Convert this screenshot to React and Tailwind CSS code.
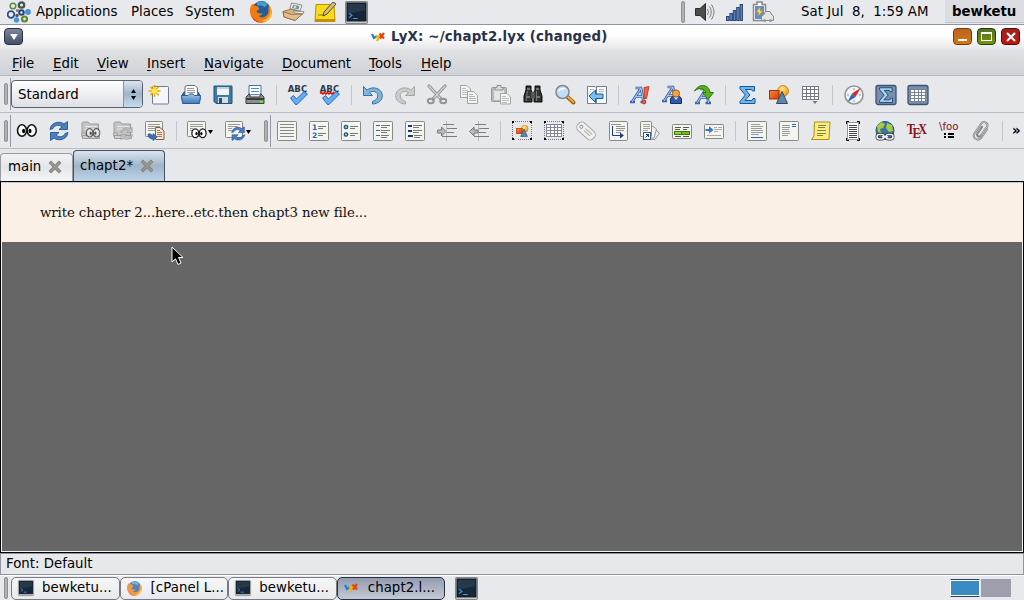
import React from 'react';

/* ---------- icon helpers ---------- */
const Svg = ({ size = 20, children, className = '' }) => (
  <svg width={size} height={size} viewBox="0 0 20 20" className={`block shrink-0 overflow-visible ${className}`}>
    <defs>
      <linearGradient id="orange" x1="0" y1="0" x2="1" y2="1"><stop offset="0" stopColor="#ff8a3c" /><stop offset="1" stopColor="#d03c00" /></linearGradient>
      <linearGradient id="blueFill" x1="0" y1="0" x2="0" y2="1"><stop offset="0" stopColor="#9fc6e8" /><stop offset="1" stopColor="#3f78b4" /></linearGradient>
      <radialGradient id="gold" cx=".4" cy=".3" r=".8"><stop offset="0" stopColor="#ffe08a" /><stop offset="1" stopColor="#e8940c" /></radialGradient>
    </defs>
    {children}
  </svg>
);
const R = (p) => <rect shapeRendering="crispEdges" {...p} />;
const Lines = ({ rows, color = '#9a9a9a' }) =>
  rows.map(([x, y, w], i) => <R key={i} x={x} y={y} width={w} height="1" fill={color} />);
const Page = ({ x = 0.5, y = 0.5, w = 19, h = 19, fill = '#f4f4f1', stroke = '#868a80' }) => (
  <rect x={x} y={y} width={w} height={h} rx=".8" fill={fill} stroke={stroke} />
);

const Eyes = ({ x = 0, y = 0, s = 1 }) => (
  <g transform={`translate(${x} ${y}) scale(${s})`}>
    <ellipse cx="5" cy="9.5" rx="4.5" ry="5.8" fill="#fff" stroke="#151515" strokeWidth="1.6" />
    <ellipse cx="14.7" cy="9.5" rx="4.5" ry="5.8" fill="#fff" stroke="#151515" strokeWidth="1.6" />
    <ellipse cx="6.6" cy="10" rx="1.500" ry="2.200" fill="#000" /><ellipse cx="13" cy="10" rx="1.500" ry="2.200" fill="#000" />
  </g>
);
const Refresh = ({ x = 0, y = 0, s = 1, c = '#4a80c0', d = '#204a87' }) => (
  <g transform={`translate(${x} ${y}) scale(${s})`} fill={c} stroke={d} strokeWidth=".8" strokeLinejoin="round">
    <path d="M1 8.500C2 1 11 -.5 15 3L18.500 .500V8.500H10L13 5.800C9 3 5.500 4.500 4 7.500Z" />
    <path d="M19 11.500C18 19 9 20.500 5 17L1.500 19.500V11.500H10L7 14.200C11 17 14.500 15.500 16 12.500Z" />
  </g>
);
const Folder = () => (
  <g fill="#c4c4c4" stroke="#9b9b9b">
    <path d="M1 16V2.500Q1 1 2.500 1H7L9 3H17.500V16Z" /><path d="M4 5.500H16M4 8H13" stroke="#e8e8e8" />
    <path d="M.5 12H4L5 16.500H1.500Z" fill="#d8d8d8" /><path d="M1.500 14.500H18L18.500 17.500H1.500Z" fill="#d0d0d0" />
  </g>
);
const Grid = ({ x, y, w, h, cols, rows, stroke = '#747883', fill = '#fff' }) => (
  <g shapeRendering="crispEdges" stroke={stroke} fill="none">
    <rect x={x} y={y} width={w} height={h} fill={fill} />
    {Array.from({ length: cols - 1 }, (_, i) => <path key={'c' + i} d={`M${x + Math.round((w / cols) * (i + 1))} ${y}v${h}`} />)}
    {Array.from({ length: rows - 1 }, (_, i) => <path key={'r' + i} d={`M${x} ${y + Math.round((h / rows) * (i + 1))}h${w}`} />)}
  </g>
);
const Corners = () => (
  <g shapeRendering="crispEdges">
    <rect x=".5" y=".5" width="19" height="18" fill="none" stroke="#777" strokeDasharray="1 1" />
    <path d="M0 0h2v2h-2zM18 0h2v2h-2zM0 17h2v2h-2zM18 17h2v2h-2z" fill="#000" />
  </g>
);
const Shapes = ({ x = 0, y = 0, s = 1 }) => (
  <g transform={`translate(${x} ${y}) scale(${s})`}>
    <circle cx="14" cy="6" r="5.500" fill="url(#gold)" stroke="#c77708" strokeWidth=".8" />
    <rect x=".5" y="5.500" width="9.500" height="8.500" fill="url(#orange)" stroke="#a83200" />
    <path d="M13 6.500L18.500 18.500H7.500Z" fill="#5e86a6" stroke="#2c4a63" strokeLinejoin="round" />
  </g>
);
const Sigma = ({ light }) => (
  <path d="M3 1.500H17.500V6H15.500L14.500 4.500H8.500L13 10L8 15.500H15L16 13.500H18V18.500H3V16.500L8.300 10L3 3.700Z"
    fill={light ? '#a9d4f5' : '#72b4ea'} stroke={light ? '#123c66' : '#0d5a9c'} strokeLinejoin="round" />
);
const BlueA = ({ x = 0, y = 0 }) => (
  <g transform={`translate(${x} ${y})`} fill="none" strokeLinejoin="round">
    <path d="M2 17L11 3L13.500 17M5.500 11.500H12.500M0 17H5M10.500 17H16M5.500 3H12" stroke="#3a62a4" strokeWidth="2.700" />
    <path d="M2 17L11 3L13.500 17M5.500 11.500H12.500M6 3H11" stroke="#a9c4ea" strokeWidth="1.100" />
  </g>
);
const Check = () => <path d="M2.500 13L5.500 10.500L8.500 14L16 6.500L19.500 9L9 19.500H7.500Z" fill="#64aef2" stroke="#1e60ac" strokeWidth=".9" strokeLinejoin="round" />;
const Abc = () => <text x="-.3" y="6.600" fontFamily="DejaVu Sans" fontWeight="bold" fontSize="8.800" textLength="19.500" lengthAdjust="spacingAndGlyphs" fill="#2e3b48">ABC</text>;
const UndoPath = ({ c, d }) => (
  <path d="M.5 1.500V10.500H9.500L6.500 7.500C10.500 5 15 7 14.800 11C14.600 14 12.500 15.500 9.500 16.500V19C15.500 18.700 19.300 15.500 19.300 10.500C19 3.500 10 .5 4 5Z" fill={c} stroke={d} strokeLinejoin="round" />
);

const I = {
  newDoc: <><Page x={3.5} y={1.5} w={16} h={17.5} fill="#f3f7fb" stroke="#6f7a86" /><path d="M5.500 0V12M-.5 6H11.500M1.300 1.800L9.700 10.200M9.700 1.800L1.300 10.200" stroke="#f0a800" strokeWidth="1.500" /><circle cx="5.500" cy="6" r="2.600" fill="#ffe94a" /></>,
  open: <><path d="M1 10.500L3 7H17L19 10.500V15H1Z" fill="#3465a4" stroke="#204a87" /><path d="M4 11.500V1.500L6 .5H14L16.500 3V11.500Z" fill="#fafafa" stroke="#6e6e6e" /><Lines rows={[[6, 3, 7], [6, 5, 8], [6, 7, 8]]} /><path d="M.5 10.500H7L8.500 9H12L13.500 10.500H19.500L18.500 18.500H1.500Z" fill="url(#blueFill)" stroke="#2b5b98" /></>,
  save: <><path d="M1 1H19V18.500H3L1 16.500Z" fill="#3b7da8" stroke="#24516f" /><R x="4" y="2" width="12" height="8" fill="#f5f5f5" /><R x="4" y="2" width="12" height="2" fill="#b9cfdf" /><R x="5" y="12" width="10" height="6" fill="#d6dce0" /><R x="6" y="13" width="3" height="5" fill="#24516f" /></>,
  print: <><path d="M4 10V.5H16V10" fill="#fff" stroke="#3b76ae" /><Lines color="#4a90c8" rows={[[6, 3, 8], [6, 6, 8], [6, 9, 8]]} /><path d="M1 12L4 9H5V12H15V9H16L19 12V18.500H1Z" fill="#8d8f8f" stroke="#3c3f3f" /><R x="1" y="13" width="18" height="2" fill="#3a3c3c" /><R x="15" y="16" width="3" height="2" fill="#67e62a" /></>,
  spell: <><Abc /><Check /></>,
  spell2: <><Abc /><path d="M0 8.500L1.500 7.500L3 9L4.500 7.500L6 9L7.500 7.500L9 9L10.500 7.500L12 9L13.500 7.500L15 9" fill="none" stroke="#e00000" strokeWidth="1.400" /><Check /></>,
  undo: <UndoPath c="#82b5da" d="#39709f" />,
  redo: <g transform="translate(20 0) scale(-1 1)"><UndoPath c="#ccc" d="#a5a5a5" /></g>,
  cut: <g fill="none" strokeLinecap="round"><path d="M2 1L14 14M18 1L6 14" stroke="#8c8c8c" strokeWidth="3.200" /><path d="M2 1L13 13M18 1L7 13" stroke="#d2d2d2" strokeWidth="1.400" /><ellipse cx="3.800" cy="16" rx="3" ry="2.300" stroke="#929292" strokeWidth="1.900" /><ellipse cx="16.200" cy="16" rx="3" ry="2.300" stroke="#929292" strokeWidth="1.900" /></g>,
  copy: <g><path d="M1.500 .5H8L11.500 4V12.500H1.500Z" fill="#f3f3f3" stroke="#a2a2a2" /><Lines color="#bdbdbd" rows={[[3, 3, 4], [3, 5, 6], [3, 7, 6], [3, 9, 6]]} /><path d="M8.500 6.500H14.500L18.500 10.500V18.500H8.500Z" fill="#f3f3f3" stroke="#a2a2a2" /><Lines color="#b5b5b5" rows={[[10, 9, 4], [10, 11, 6], [10, 13, 7], [10, 15, 7]]} /></g>,
  paste: <g><rect x=".5" y="2.500" width="15" height="14" rx="1" fill="#b9b9b9" stroke="#999" /><rect x="3" y="5" width="10" height="10" fill="#e4e4e4" /><path d="M4 5V2.500H6V.5H10V2.500H12V5Z" fill="#ddd" stroke="#8e8e8e" /><path d="M9.500 8.500H16L19.500 12V19H9.500Z" fill="#f5f5f5" stroke="#a3a3a3" /><Lines color="#bbb" rows={[[11, 11, 4], [11, 13, 7], [11, 15, 7], [11, 17, 5]]} /></g>,
  find: <g><path d="M3 1H8V5L9 7V17H1V11L3 5ZM12 1H17V5L19 11V17H11V7L12 5Z" fill="#333" stroke="#0c0c0c" /><path d="M8 7h4v6H8z" fill="#555" /><path d="M3 12H7M13 12H17M4 4H7M13 4H16" stroke="#898989" strokeWidth="1.500" /><path d="M4.500 6L3 16M13.500 6V16" stroke="#777" /></g>,
  zoom: <g><path d="M12.500 12L18.500 17.500" stroke="#99580b" strokeWidth="4" strokeLinecap="round" /><path d="M13 12L18.300 17" stroke="#f3aa32" strokeWidth="2" strokeLinecap="round" /><circle cx="7.500" cy="7" r="6.500" fill="#c3ddf4" stroke="#7b8992" strokeWidth="1.500" /><path d="M3 7C4 2 9 2 11 4C8 4 5 5 3 7Z" fill="#fff" /></g>,
  goBack: <g><path d="M.5 1.500H8L9.500 3V18.500H.5Z" fill="#fafafa" stroke="#727f8d" /><path d="M9.500 1.500H19.500V18.500H9.500Z" fill="#fafafa" stroke="#727f8d" /><Lines color="#bbb" rows={[[3, 4, 4], [12, 4, 5], [12, 6, 5]]} /><path d="M2 11L8.500 5V9H16V13.500H8.500V17.500Z" fill="#7cbdf0" stroke="#14629f" strokeLinejoin="round" /></g>,
  emph: <g><BlueA /><path d="M14 2.500L19 1.500L16.500 13.500H14Z" fill="#ef6345" stroke="#ae2d13" strokeWidth=".8" /><circle cx="14" cy="17" r="1.900" fill="#ef6345" stroke="#ae2d13" strokeWidth=".8" /></g>,
  noun: <g><BlueA x={0} y={-1} /><path d="M8.500 18.500V14Q9 11 14 11Q19 11 19.500 14V18.500Z" fill="#2d5da6" stroke="#152f66" /><path d="M12 12L14 15L16 12Z" fill="#eee" /><circle cx="14" cy="8.500" r="3.600" fill="#f2a345" stroke="#ad5d0b" /></g>,
  apply: <g><BlueA x={1} y={1} /><path d="M.5 6C5-2 15-1 16 7.500H19.500L14 14.500L8.500 7.500H12C11 3.500 5 2 .5 6Z" fill="#55b31c" stroke="#2d7608" strokeLinejoin="round" /></g>,
  sigma: <Sigma />,
  shapes: <Shapes />,
  table: <g><Grid x={1.5} y={1.5} w={16} h={13} cols={4} rows={4} /><path d="M11.500 16H16.500L14 19Z" fill="#777" /></g>,
  compass: <g><circle cx="10" cy="10" r="9" fill="#f3f5f8" stroke="#969696" strokeWidth="1.600" /><path d="M10 3v2M10 15v2M3 10h2M15 10h2" stroke="#8295aa" /><path d="M16.500 3L11.500 12L8 8.500Z" fill="#e3261c" /><path d="M3.500 17L8 8.500L11.500 12Z" fill="#2f63bd" /></g>,
  sigmaOn: <g><rect x="0" y=".5" width="20" height="19" rx="2" fill="#7890ae" stroke="#3e536f" strokeWidth="1.300" /><g transform="translate(1 1.500) scale(.86)"><Sigma light /></g></g>,
  tableOn: <g><rect x="0" y=".5" width="20" height="19" rx="2" fill="#7990ad" stroke="#3e536f" strokeWidth="1.300" /><Grid x={2.5} y={4.5} w={15} h={12} cols={4} rows={4} stroke="#75829a" /></g>,

  eyes: <Eyes />,
  refresh: <Refresh />,
  folderEyes: <><Folder /><g opacity=".6"><Eyes x={5} y={5} s={0.72} /></g></>,
  folderRefresh: <><Folder /><Refresh x={7} y={6} s={0.66} c="#c3c3c3" d="#8e8e8e" /></>,
  docUpdate: <><Page w={17} h={15} /><Lines rows={[[3, 3, 12], [3, 5, 12], [3, 7, 7], [3, 9, 7]]} /><path d="M10.500 6.500H15L19 10V18.500H10.500Z" fill="#f4e6d3" stroke="#806040" /><Lines color="#9a7a60" rows={[[12, 9, 3], [12, 11, 5], [12, 13, 5], [12, 15, 5]]} /><path d="M3 13H6Q6 15 8 15V12.500L12 16L8 19.500V18Q3 18 3 13Z" fill="#3b70b0" stroke="#204a87" strokeWidth=".7" /></>,
  docEyes: <><Page w={18} h={15} /><Lines rows={[[3, 3, 13], [3, 5, 13], [3, 7, 3], [3, 9, 2]]} /><Eyes x={4.5} y={5} s={0.76} /></>,
  docRefresh: <><Page w={17} h={16} /><Lines rows={[[3, 3, 12], [3, 5, 10], [3, 7, 4], [3, 9, 4]]} /><Refresh x={6} y={5.5} s={0.72} /></>,
  plain: <><Page /><Lines rows={[[3, 3, 14], [3, 6, 14], [3, 9, 14], [3, 12, 14], [3, 15, 14]]} color="#888" /></>,
  numbered: <><Page /><g fontFamily="DejaVu Sans" fontWeight="bold" fontSize="7.500" fill="#3465a4"><text x="3" y="9">1</text><text x="3" y="16.500">2</text></g><Lines rows={[[9, 5, 8], [9, 7, 5], [9, 12, 8], [9, 14, 5]]} color="#777" /></>,
  bullets: <><Page /><circle cx="5" cy="6" r="1.700" fill="#9fd4e0" stroke="#1b5874" strokeWidth="1.300" /><circle cx="5" cy="13.500" r="1.700" fill="#9fd4e0" stroke="#1b5874" strokeWidth="1.300" /><Lines rows={[[9, 5, 8], [9, 7, 5], [9, 12, 8], [9, 14, 5]]} color="#777" /></>,
  list: <><Page /><Lines rows={[[3, 4, 4], [3, 9, 4], [3, 14, 4]]} color="#3465a4" /><Lines rows={[[8, 4, 9], [8, 6, 6], [8, 9, 9], [8, 11, 6], [8, 14, 8], [8, 16, 6]]} color="#777" /></>,
  descr: <><Page /><g fill="#163c69"><R x="3" y="4" width="4" height="2" /><R x="3" y="9" width="4" height="2" /><R x="3" y="14" width="5" height="2" /></g><Lines rows={[[8, 4, 9], [8, 6, 6], [8, 9, 9], [8, 11, 6], [9, 14, 8], [9, 16, 6]]} color="#777" /></>,
  indent: <><R x="9" y="0" width="1" height="20" fill="#bbb" /><Lines rows={[[6, 3, 11], [10, 7, 10], [10, 11, 7], [5, 15, 15]]} color="#7d7d7d" /><path d="M.5 9H4.500V6L9 10.500L4.500 15V12H.5Z" fill="#bbb" stroke="#777" /></>,
  outdent: <><R x="9" y="0" width="1" height="20" fill="#bbb" /><Lines rows={[[6, 3, 11], [10, 7, 10], [10, 11, 7], [5, 15, 15]]} color="#7d7d7d" /><path d="M9 9H5V6L.5 10.500L5 15V12H9Z" fill="#bbb" stroke="#777" /></>,
  figFloat: <><Corners /><Shapes x={4} y={4} s={0.62} /></>,
  tabFloat: <><Corners /><Grid x={2.5} y={3.5} w={15} h={12} cols={4} rows={4} stroke="#85859a" /></>,
  tag: <g transform="rotate(42 10 10)"><rect x="-.5" y="5" width="21" height="10" rx="4.500" fill="#f0f0ee" stroke="#a4a4a4" /><circle cx="3.700" cy="10" r="1.500" fill="#fff" stroke="#999" /><path d="M8 8.500h9M8 11h8" stroke="#aaa" /></g>,
  cross: <><Page x={1.5} w={18} /><Lines rows={[[3, 3, 10], [8, 5, 9], [8, 7, 9], [8, 9, 8], [8, 11, 5]]} color="#929292" /><path d="M4.500 5V14.500H13" fill="none" stroke="#203f75" /><path d="M12 11.500L16 14.500L12 17.500Z" fill="#203f75" /></>,
  cite: <><path d="M10 4.500L19.500 12L15 18.500H7Z" fill="#eeeeec" stroke="#999" /><path d="M8 2L16.500 8L14 17H6Z" fill="#f1f1ef" stroke="#999" /><Page x={0.5} w={11} h={15} /><Lines rows={[[3, 3, 7], [3, 5, 7], [3, 7, 7], [3, 9, 5]]} color="#a4a4a4" /><rect x="3.500" y="11.500" width="7" height="7" fill="#fff" stroke="#355783" /><path d="M5.500 16.500L8.500 13.500M6 13.500H8.500V16" fill="none" stroke="#16376a" /></>,
  index: <><Page y={3.5} h={14} /><Lines rows={[[3, 6, 6], [11, 6, 6], [3, 8, 5], [11, 8, 4], [3, 15, 6], [11, 15, 6]]} color="#555" /><R x="2" y="10" width="16" height="4" fill="#3f7a08" /><R x="3" y="11" width="6" height="2" fill="#8ed63c" /><R x="10" y="11" width="7" height="2" fill="#73b51c" /></>,
  nomencl: <><Page y={3.5} h={14} /><path d="M1.500 8H5V5L9.500 9L5 12.500V10H1.500Z" fill="#3279d0" /><Lines rows={[[10, 6, 3], [14, 6, 4], [10, 8, 8], [10, 10, 4], [3, 14, 14]]} color="#aaa" /></>,
  foot: <><Page /><Lines rows={[[4, 3, 9], [4, 5, 12], [4, 7, 11], [4, 9, 12], [4, 11, 12], [4, 13, 8]]} /><R x="4" y="16" width="12" height="1" fill="#3465a4" /></>,
  margin: <><Page /><Lines rows={[[3, 4, 8], [3, 6, 8], [3, 8, 7], [3, 10, 8], [3, 12, 8], [3, 14, 6]]} /><Lines rows={[[13, 3, 4], [13, 5, 4]]} color="#3465a4" /></>,
  note: <><path d="M3.500 1H19L18 18.500H.5L3 15Z" fill="#f9ee86" stroke="#ae8f0c" /><Lines rows={[[7, 4, 8], [7, 6, 7], [6, 9, 9], [6, 12, 9], [6, 14, 6]]} color="#8b8038" /></>,
  box: <><rect x="4.500" y="1.500" width="11" height="17" fill="#fff" stroke="#999" /><Lines rows={[[6, 4, 8], [6, 6, 8], [6, 8, 8], [6, 10, 8], [6, 12, 8], [6, 14, 8], [6, 16, 8]]} color="#444" /><path d="M6 .5H3.500V3M14 .5H16.500V3M6 19.500H3.500V17M14 19.500H16.500V17" fill="none" stroke="#000" /></>,
  link: <><circle cx="10" cy="9.500" r="9" fill="#3773ad" stroke="#24527d" /><path d="M2 5L6 1L10 3L8 7L5 8L6 12L3 11ZM12 2L17 4L18 10L14 11L11 7Z" fill="#a9cb3c" /><g fill="none" stroke="#333" strokeWidth="3"><rect x="2" y="13.500" width="7" height="4.500" rx="2.200" /><rect x="11" y="13.500" width="7" height="4.500" rx="2.200" /><path d="M7 15.800H13" /></g><g fill="none" stroke="#f0f0f0" strokeWidth="1.600"><rect x="2" y="13.500" width="7" height="4.500" rx="2.200" /><rect x="11" y="13.500" width="7" height="4.500" rx="2.200" /><path d="M7 15.800H13" /></g></>,
  tex: <text transform="translate(-.3 0) scale(.86 1)" x="0" y="13.500" fontFamily="Liberation Serif" fontWeight="bold" fontSize="14" fill="#8d1015">T<tspan dx="-2.600" dy="3.500">E</tspan><tspan dx="-2.600" dy="-3.500">X</tspan></text>,
  foo: <g><text x="0" y="9" fontFamily="DejaVu Sans" fontSize="10" textLength="19.500" lengthAdjust="spacingAndGlyphs" fill="#7e1519">\foo</text><g fill="#000"><R x="5" y="12" width="2" height="2" /><R x="5" y="15" width="2" height="2" /><R x="9" y="12" width="6" height="2" /><R x="9" y="15" width="6" height="2" /></g></g>,
  clip: <g fill="none" transform="rotate(35 10 10)" strokeLinecap="round"><path d="M14 5V15Q14 19.500 10 19.500Q6 19.500 6 15V3.500Q6 .5 9.500 .5Q12.500 .5 12.500 3.500V13.500Q12.500 16 10.300 16Q8.500 16 8.500 13.500V6" stroke="#848484" strokeWidth="2" /><path d="M14 5V15Q14 19.500 10 19.500Q6 19.500 6 15V3.500Q6 .5 9.500 .5Q12.500 .5 12.500 3.500V13.500" stroke="#c9c9c9" strokeWidth=".8" /></g>,
};

const Firefox = ({ size, className }) => (
  <Svg size={size} className={className}>
    <circle cx="10" cy="10" r="9.500" fill="#e0560f" />
    <circle cx="10.500" cy="7.500" r="7.500" fill="#1f5f9e" />
    <path d="M6 1.500Q11-1 15.500 2.500Q16 5 13 5.500Q10 3 7 4.500Z" fill="#4b9ad0" />
    <path d="M0 10Q-.5 5 2.500 2.500L3.500 4.500Q6 4 7.500 5.500L8.500 7.500Q6 8 6 10Q8 12 11.500 11Q10.500 14 7.500 13.500Q11.500 17 15.500 13Q17.500 10 16.500 6L18.500 5Q22 13 16 18Q10 21.500 4.500 18Q.5 15 0 10Z" fill="#ef7c16" />
    <path d="M17 3Q20 8 17.500 13.500Q15 17.500 10 18Q17.500 20.500 19.500 12Q20 6 17 3Z" fill="#fdc436" />
    <path d="M.8 12Q3 17.500 9 19.500Q4 20 .8 12Z" fill="#b9300f" />
  </Svg>
);
const Terminal = ({ size, className }) => (
  <Svg size={size} className={className}>
    <rect x=".5" y=".5" width="19" height="19" rx="1" fill="#dededa" stroke="#878783" />
    <rect x="1.800" y="1.800" width="16.400" height="15.500" fill="#152739" stroke="#0a1520" />
    <path d="M2.500 2.500H17.500V8L2.500 11Z" fill="#26394b" />
    <path d="M3.500 10.500L6 12.500L3.500 14.500M7 15.200H11" fill="none" stroke="#4a9ae8" />
  </Svg>
);
const LyxLogo = () => (
  <svg width="14" height="10" viewBox="0 0 14 10" className="block shrink-0">
    <path d="M1 2L3 6L6 4" fill="none" stroke="#1f7de0" strokeWidth="2.200" />
    <path d="M5 4L8 5L10 3M8 5L6 9" fill="none" stroke="#f5b400" strokeWidth="2.400" />
    <path d="M8.500 1.500L13 6.500M13 1L9 6.500" fill="none" stroke="#e04412" strokeWidth="2.200" />
  </svg>
);

/* ---------- building blocks ---------- */
const Slot = ({ name }) => <div className="flex h-8 w-8 shrink-0 items-center justify-center"><Svg>{I[name]}</Svg></div>;
const Sep = () => <div className="flex h-8 w-[11px] shrink-0 items-center justify-center"><div className="h-5 w-px bg-[#c6c7cc]" /></div>;
const Slots = ({ names }) => names.map((n, i) => (n === '|' ? <Sep key={i} /> : <Slot key={i} name={n} />));
const DropSlot = ({ name }) => (
  <div className="flex h-8 w-[38px] shrink-0 items-center pl-[5px]">
    <Svg>{I[name]}</Svg>
    <svg width="5" height="4" viewBox="0 0 5 4" className="mt-[3px] ml-px"><path d="M0 0H5L2.500 4Z" fill="#000" /></svg>
  </div>
);
const Handle = () => <div className="h-[22px] w-1 shrink-0 rounded-sm border border-[#8f9195] bg-[#b0b1b5]" />;
const Close = () => (
  <svg width="14" height="14" viewBox="0 0 14 14" className="block shrink-0">
    <path d="M3 3L11 11M11 3L3 11" stroke="#80817a" strokeWidth="3.400" strokeLinecap="square" />
    <path d="M3 3L11 11M11 3L3 11" stroke="#96978f" strokeWidth="1.800" strokeLinecap="square" />
  </svg>
);

const MENU = [['File', 'w-[41px]'], ['Edit', 'w-[44px]'], ['View', 'w-[50px]'], ['Insert', 'w-[57px]'], ['Navigate', 'w-[78px]'], ['Document', 'w-[87px]'], ['Tools', 'w-[52px]'], ['Help', 'w-[40px]']];
const STANDARD = ['newDoc', 'open', 'save', 'print', '|', 'spell', 'spell2', '|', 'undo', 'redo', 'cut', 'copy', 'paste', 'find', 'zoom', 'goBack', '|', 'emph', 'noun', 'apply', '|', 'sigma', 'shapes', 'table', '|', 'compass', 'sigmaOn', 'tableOn'];
const VIEW = ['eyes', 'refresh', 'folderEyes', 'folderRefresh', 'docUpdate', '|'];
const EXTRA = ['plain', 'numbered', 'bullets', 'list', 'descr', 'indent', 'outdent', '|', 'figFloat', 'tabFloat', 'tag', 'cross', 'cite', 'index', 'nomencl', '|', 'foot', 'margin', 'note', 'box', 'link', 'tex', 'foo', 'clip', '|'];

function Panel() {
  return (
    <div className="flex h-[25px] shrink-0 items-center border-b border-[#9293a3] bg-[#e8e9ec]">
      <svg width="24" height="22" viewBox="0 0 24 22" className="ml-[7px] block shrink-0" fill="none">
        <circle cx="6" cy="5" r="2.800" stroke="#5d8b40" strokeWidth="1.500" />
        <circle cx="14.500" cy="4" r="2.700" stroke="#4b554f" strokeWidth="2.300" />
        <circle cx="4" cy="13.500" r="3.300" stroke="#264e83" strokeWidth="1.700" />
        <circle cx="14.500" cy="11.500" r="2.300" stroke="#1f467d" strokeWidth="2" />
        <circle cx="21" cy="11" r="2.900" fill="#4d92d4" /><circle cx="9.500" cy="19" r="2.700" fill="#4d92d4" />
        <circle cx="17.500" cy="18" r="2.500" stroke="#5d8b29" strokeWidth="2.200" />
        <circle cx="10.500" cy="9.500" r="1.600" fill="#777" /><circle cx="10" cy="14.500" r="1.700" fill="#555" />
      </svg>
      <span className="ml-[5px] w-[95px]">Applications</span>
      <span className="w-[54px]">Places</span>
      <span className="w-[65px]">System</span>
      <Firefox size={22} />
      <svg width="23" height="20" viewBox="0 0 23 20" className="ml-[10px] block shrink-0">
        <path d="M1 9.500L9 7L21 10.500L13 18.500L2 15Z" fill="#d8b27b" stroke="#866438" strokeWidth=".8" />
        <path d="M9.500 1L20 3L18 9L8 6.500Z" fill="#f4f4ef" stroke="#777" strokeWidth=".8" />
        <path d="M11 2.800L17.500 4L16.500 7.500L10 6Z" fill="#6f98a2" /><circle cx="13" cy="5" r="1.300" fill="#cfe0c0" />
        <path d="M11 9L22 9.500L21 12L13 11Z" fill="#eeeeea" stroke="#777" strokeWidth=".7" />
        <path d="M1 9.500L9.500 12.500L20.500 12L13 18.500L2 15Z" fill="#e1bf8d" stroke="#866438" strokeWidth=".8" />
      </svg>
      <svg width="22" height="21" viewBox="0 0 22 21" className="ml-[9px] block shrink-0">
        <path d="M2 2.500H20L21 19.500H1Z" fill="#f7dc1c" stroke="#b88d08" /><path d="M1 17H21V20H1Z" fill="#c58e0a" />
        <path d="M4 13H11" stroke="#8f7a18" /><path d="M9 14L10 10L19 0L22 2L13 12Z" fill="#d8c07a" stroke="#544a2a" />
      </svg>
      <Terminal size={23} className="ml-[9px]" />
      <div className="ml-auto flex h-full shrink-0 items-center">
        <Handle />
        <svg width="20" height="20" viewBox="0 0 20 20" className="ml-[10px] block">
          <path d="M.5 6.500H5L10.500 1.500V18.500L5 13.500H.5Z" fill="#4c4d4d" stroke="#2c2c2c" />
          <path d="M12.500 7Q14.500 10 12.500 13M14.500 4.500Q18 10 14.500 15.500M16.500 2.500Q21.500 10 16.500 17.500" fill="none" stroke="#808080" />
        </svg>
        <svg width="17" height="17" viewBox="0 0 17 17" className="ml-[11px] block">
          {[0, 1, 2, 3, 4].map((i) => <rect key={i} x={i * 3.4 + 0.5} y={12.5 - i * 3} width="2.500" height={4 + i * 3} fill="#5485c9" stroke="#263c63" strokeWidth=".9" />)}
        </svg>
        <svg width="22" height="22" viewBox="0 0 22 22" className="ml-[9px] block">
          <path d="M1.500 3.500H5V1H10V3.500H13.500V19.500H1.500Z" fill="#fff" stroke="#888" strokeWidth="1.500" />
          <path d="M3 5H12V18H3Z" fill="#668fc1" /><path d="M8 6L4.500 11H7L6 15L10.500 10H8Z" fill="#ffe98a" stroke="#d49814" strokeWidth=".7" />
          <path d="M9.500 19.500V15L11.500 14L13.500 10.500H18L20 14L21.500 15V19.500Z" fill="#e4e4e1" stroke="#888" /><circle cx="12.500" cy="19.500" r="1.500" fill="#999" /><circle cx="18.500" cy="19.500" r="1.500" fill="#999" />
        </svg>
        <span className="ml-[27px] w-[144px] whitespace-pre tracking-[0.04px]">Sat Jul  8,  1:59 AM</span>
        <div className="flex h-[23px] w-[79px] items-center self-start border-b border-[#c0c2c9] bg-[#dcdde2] pt-[2px] pl-[7px] font-bold">bewketu</div>
      </div>
    </div>
  );
}

function WinButton({ className, children }) {
  return <div className={`flex h-[17px] w-[19px] items-center justify-center rounded-[4px] border ${className}`}>{children}</div>;
}

function TitleBar() {
  return (
    <div className="flex h-[25px] shrink-0 items-center bg-linear-to-b from-white from-40% to-[#e6e6e8] px-1">
      <WinButton className="mb-[2px] border-[#25304a] bg-linear-to-b from-[#7f889b] to-[#454f66]">
        <svg width="8" height="6" viewBox="0 0 8 6"><path d="M0 0H8L4 6Z" fill="#fff" /></svg>
      </WinButton>
      <div className="ml-[348px] flex items-center gap-[6px] pb-[2px] font-bold tracking-[0.17px] text-[#28324a]">
        <LyxLogo /><span>LyX: ~/chapt2.lyx (changed)</span>
      </div>
      <div className="mb-[2px] ml-auto flex gap-[5px]">
        <WinButton className="border-[#7e3510] bg-linear-to-b from-[#b66522] to-[#dc7407]"><div className="mt-[7px] h-[2px] w-[9px] bg-white" /></WinButton>
        <WinButton className="border-[#24400d] bg-linear-to-b from-[#557022] to-[#769408]"><div className="h-[9px] w-[11px] border border-t-2 border-white" /></WinButton>
        <WinButton className="border-[#5d0808] bg-linear-to-b from-[#972222] to-[#c51308]">
          <svg width="10" height="10" viewBox="0 0 10 10"><path d="M1 1L9 9M9 1L1 9" stroke="#fff" strokeWidth="2" /></svg>
        </WinButton>
      </div>
    </div>
  );
}

const Task = ({ icon, label, active }) => (
  <div className={`flex h-[23px] w-[108.6px] shrink-0 items-center rounded-[5px] border pl-[6px] ${active ? 'border-[#273043] bg-linear-to-b from-[#959cb0] to-[#c4c9d5]' : 'border-[#777a84] bg-linear-to-b from-[#f7f7f8] to-[#e8e9ec]'}`}>
    <div className="flex w-[24px] items-center">{icon}</div>
    <span className="tracking-[0.05px]">{label}</span>
  </div>
);

export default function App() {
  return (
    <div className="flex h-[600px] w-[1024px] flex-col overflow-hidden bg-[#e7e8ec] text-[13.33px] leading-4 text-black [font-family:'DejaVu_Sans',sans-serif]">
      <Panel />
      <TitleBar />
      <div className="flex h-[26px] shrink-0 items-center border-b border-[#b4b6c0] bg-linear-to-b from-[#dfe0e4] to-[#d1d2d7] pt-[2px] pl-3">
        {MENU.map(([m, w]) => (
          <span key={m} className={`${w} shrink-0`}><span className="underline underline-offset-2">{m[0]}</span>{m.slice(1)}</span>
        ))}
      </div>

      <div className="flex h-[37px] shrink-0 items-center border-b border-[#b9bbc6] pl-1">
        <Handle />
        <div className="h-[32px] w-[3px] shrink-0 border-r border-[#9698a8]" />
        <div className="flex h-[28px] w-[132px] shrink-0 overflow-hidden rounded-[4px] border border-[#59616e] bg-linear-to-b from-white to-[#dedfe4]">
          <span className="flex flex-1 items-center pt-[2px] pl-[6px]">Standard</span>
          <div className="flex w-[19px] flex-col items-center justify-center gap-[3px] border-l border-[#8796aa] bg-linear-to-b from-[#dbe5ee] via-[#9fb5ca] to-[#c6dcef]">
            <svg width="5" height="4" viewBox="0 0 5 4"><path d="M0 4H5L2.500 0Z" /></svg>
            <svg width="5" height="4" viewBox="0 0 5 4"><path d="M0 0H5L2.500 4Z" /></svg>
          </div>
        </div>
        <div className="flex pt-[2px]"><Slots names={STANDARD} /></div>
      </div>

      <div className="flex h-[36px] shrink-0 items-center border-b border-[#b9bbc0] pl-1">
        <Handle />
        <div className="h-[32px] w-[3px] shrink-0 border-r border-[#9698a8]" />
        <Slots names={VIEW} />
        <DropSlot name="docEyes" />
        <DropSlot name="docRefresh" />
        <div className="flex h-[32px] w-[13px] shrink-0 items-center border-r border-[#9698a8] pl-[6px]"><Handle /></div>
        <Slots names={EXTRA} />
        <span className="ml-1 pt-px font-bold">»</span>
      </div>

      <div className="flex h-[32px] shrink-0 items-end">
        <div className="flex h-[28px] w-[73px] items-center rounded-t-[4px] border border-b-0 border-[#9a9ca2] bg-linear-to-b from-[#f3f3f5] via-[#e4e5e9] to-[#f6f6f8] pb-[2px] pl-[7px]">
          <span className="w-[40px]">main</span><Close />
        </div>
        <div className="flex h-[31px] w-[92px] items-center rounded-t-[4px] border border-b-0 border-[#3d5368] bg-linear-to-b from-[#dbe4ec] via-[#a0b5c9] to-[#bed5e9] pl-[6px]">
          <span className="w-[60px] tracking-[0.05px]">chapt2*</span><Close />
        </div>
      </div>

      <div className="flex h-[372px] shrink-0 flex-col border border-black bg-[#f3f3f3]">
        <div className="h-px shrink-0 bg-[#b7cadb]" />
        <div className="h-[59px] shrink-0 bg-[#faf0e6] pt-[22px] pl-[39px] tracking-[-0.11px] text-[#111] [font-family:'DejaVu_Serif',serif]">write chapter 2...here..etc.then chapt3 new file...</div>
        <div className="relative mx-px mb-px flex-1 bg-[#666]">
          <svg width="14" height="20" viewBox="0 0 14 20" className="absolute top-[4px] left-[169px]">
            <path d="M1 1V16L4.500 12.800L7 18.500L10 17L7.500 11.500H12Z" fill="#000" stroke="#fff" />
          </svg>
        </div>
      </div>

      <div className="flex h-[22px] shrink-0 items-center border border-[#92949d] bg-[#e7e8ec] pl-[5px]">Font: Default</div>
      <div className="flex h-[25px] shrink-0 items-center border-t border-white bg-[#e8e9ec] pl-1">
        <Handle />
        <div className="w-[3px]" />
        <Task icon={<Terminal size={16} />} label="bewketu..." />
        <Task icon={<Firefox size={15} className="opacity-75" />} label="[cPanel L..." />
        <Task icon={<Terminal size={16} />} label="bewketu..." />
        <Task icon={<LyxLogo />} label="chapt2.l..." active />
        <Terminal size={23} className="ml-[10px]" />
        <div className="mr-[13px] ml-auto flex gap-px">
          <div className="h-[18px] w-[30px] border border-x-white border-y-[#2c4559] bg-white py-px"><div className="h-full bg-[#3a8ac3]" /></div>
          <div className="h-[18px] w-[30px] bg-[#9e9fac]" />
        </div>
      </div>
    </div>
  );
}
